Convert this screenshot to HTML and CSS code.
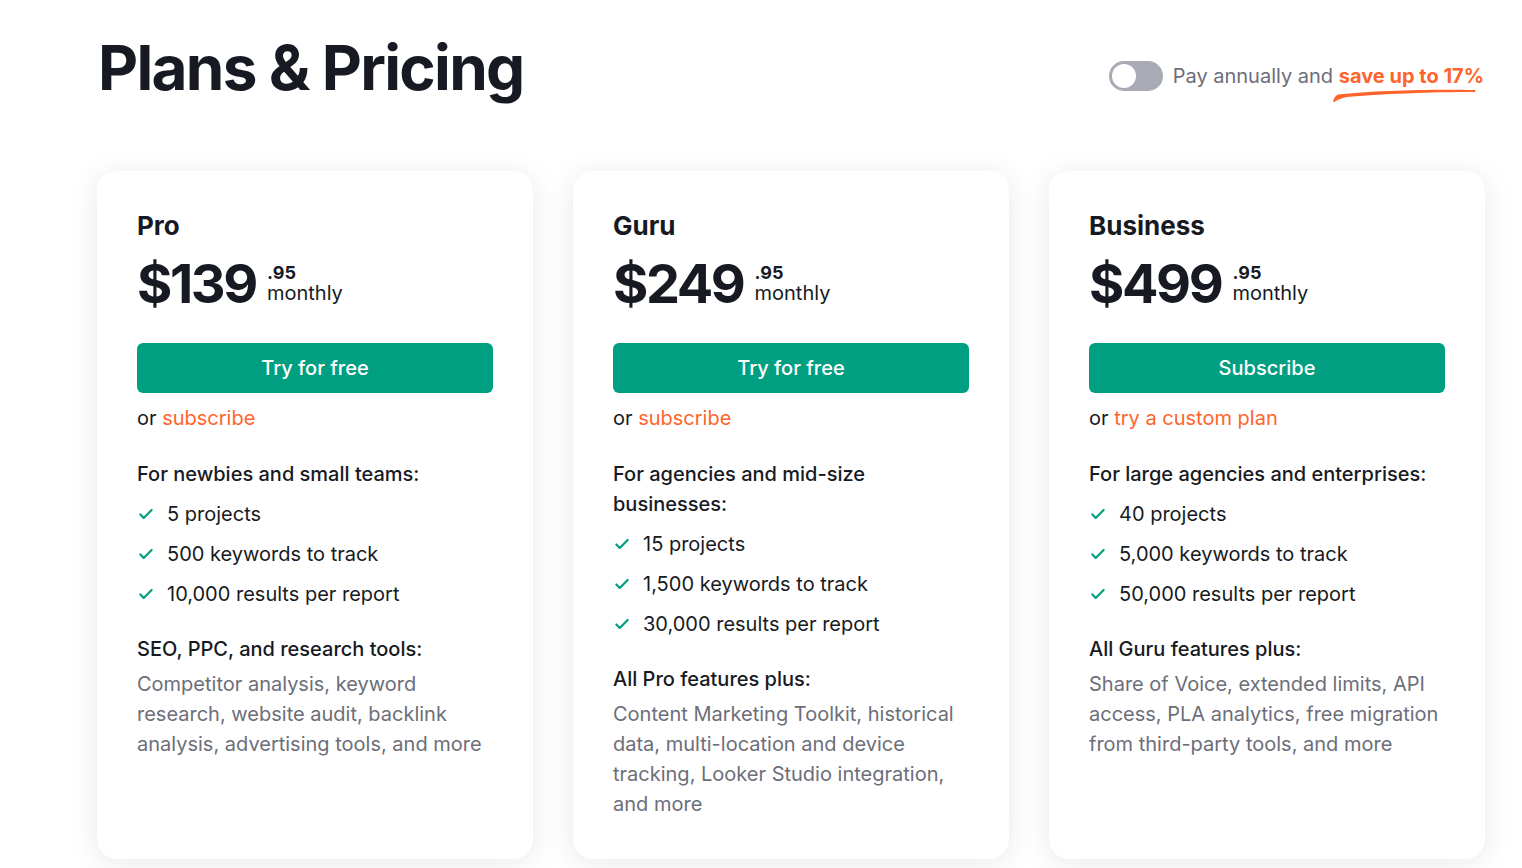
FILE: index.html
```html
<!DOCTYPE html>
<html lang="en">
<head>
<meta charset="utf-8">
<title>Plans &amp; Pricing</title>
<link rel="stylesheet" href="styles.css">
</head>
<body>
<div class="page">
  <header class="top">
    <h1 class="title">Plans &amp; Pricing</h1>
    <div class="billing">
      <span class="toggle"><span class="knob"></span></span>
      <span class="pay">Pay annually and <span class="save">save up to 17%<svg class="swoosh" viewBox="0 0 143 13" preserveAspectRatio="none"><path d="M0 12.5 C 1 9, 2 7, 5 5.5 C 40 1.5, 100 0, 142 1 L 142.5 3 C 100 3, 45 5, 14 8 C 8 9, 4 11, 1.5 13 Z" fill="#ff642d"/></svg></span></span>
    </div>
  </header>

  <section class="cards">
    <article class="card">
      <h2 class="plan">Pro</h2>
      <div class="price"><span class="amount">$139</span><span class="cents"><b>.95</b><span>monthly</span></span></div>
      <a class="btn">Try for free</a>
      <p class="alt">or <span class="link">subscribe</span></p>
      <p class="lead">For newbies and small teams:</p>
      <ul class="checks">
        <li><svg class="check" viewBox="0 0 16 16"><path d="M3 8.5l3 3 7-7" fill="none" stroke="#009f81" stroke-width="2" stroke-linecap="round" stroke-linejoin="round"/></svg>5 projects</li>
        <li><svg class="check" viewBox="0 0 16 16"><path d="M3 8.5l3 3 7-7" fill="none" stroke="#009f81" stroke-width="2" stroke-linecap="round" stroke-linejoin="round"/></svg>500 keywords to track</li>
        <li><svg class="check" viewBox="0 0 16 16"><path d="M3 8.5l3 3 7-7" fill="none" stroke="#009f81" stroke-width="2" stroke-linecap="round" stroke-linejoin="round"/></svg>10,000 results per report</li>
      </ul>
      <p class="lead">SEO, PPC, and research tools:</p>
      <p class="desc">Competitor analysis, keyword research, website audit, backlink analysis, advertising tools, and more</p>
    </article>

    <article class="card">
      <h2 class="plan">Guru</h2>
      <div class="price"><span class="amount">$249</span><span class="cents"><b>.95</b><span>monthly</span></span></div>
      <a class="btn">Try for free</a>
      <p class="alt">or <span class="link">subscribe</span></p>
      <p class="lead">For agencies and mid-size businesses:</p>
      <ul class="checks">
        <li><svg class="check" viewBox="0 0 16 16"><path d="M3 8.5l3 3 7-7" fill="none" stroke="#009f81" stroke-width="2" stroke-linecap="round" stroke-linejoin="round"/></svg>15 projects</li>
        <li><svg class="check" viewBox="0 0 16 16"><path d="M3 8.5l3 3 7-7" fill="none" stroke="#009f81" stroke-width="2" stroke-linecap="round" stroke-linejoin="round"/></svg>1,500 keywords to track</li>
        <li><svg class="check" viewBox="0 0 16 16"><path d="M3 8.5l3 3 7-7" fill="none" stroke="#009f81" stroke-width="2" stroke-linecap="round" stroke-linejoin="round"/></svg>30,000 results per report</li>
      </ul>
      <p class="lead">All Pro features plus:</p>
      <p class="desc">Content Marketing Toolkit, historical data, multi-location and device tracking, Looker Studio integration, and more</p>
    </article>

    <article class="card">
      <h2 class="plan">Business</h2>
      <div class="price"><span class="amount">$499</span><span class="cents"><b>.95</b><span>monthly</span></span></div>
      <a class="btn">Subscribe</a>
      <p class="alt">or <span class="link">try a custom plan</span></p>
      <p class="lead">For large agencies and enterprises:</p>
      <ul class="checks">
        <li><svg class="check" viewBox="0 0 16 16"><path d="M3 8.5l3 3 7-7" fill="none" stroke="#009f81" stroke-width="2" stroke-linecap="round" stroke-linejoin="round"/></svg>40 projects</li>
        <li><svg class="check" viewBox="0 0 16 16"><path d="M3 8.5l3 3 7-7" fill="none" stroke="#009f81" stroke-width="2" stroke-linecap="round" stroke-linejoin="round"/></svg>5,000 keywords to track</li>
        <li><svg class="check" viewBox="0 0 16 16"><path d="M3 8.5l3 3 7-7" fill="none" stroke="#009f81" stroke-width="2" stroke-linecap="round" stroke-linejoin="round"/></svg>50,000 results per report</li>
      </ul>
      <p class="lead">All Guru features plus:</p>
      <p class="desc">Share of Voice, extended limits, API access, PLA analytics, free migration from third-party tools, and more</p>
    </article>
  </section>
</div>
</body>
</html>
```

FILE: styles.css
```css
* { box-sizing: border-box; }
html, body { margin: 0; padding: 0; background: #ffffff; }
body {
  font-family: Inter, "Noto Sans", Arial, sans-serif;
  color: #171a22;
  overflow: hidden;
}
.page {
  padding: 0 38px 0 97px;
  height: 868px;
}
.top {
  display: flex;
  justify-content: space-between;
  align-items: flex-start;
  height: 171px;
}
.title {
  margin: 30px 0 0 1px;
  font-size: 62px;
  font-weight: 700;
  letter-spacing: -1.7px;
  line-height: 76px;
  color: #171a22;
}
.billing {
  display: flex;
  align-items: center;
  gap: 10px;
  margin-top: 61px;
}
.toggle {
  width: 54px;
  height: 30px;
  border-radius: 15px;
  background: #a8aab6;
  display: flex;
  align-items: center;
  padding: 0 3px;
}
.knob {
  width: 24px;
  height: 24px;
  border-radius: 50%;
  background: #fff;
}
.pay {
  font-size: 20px;
  color: #6c6e79;
  line-height: 30px;
}
.save {
  position: relative;
  color: #ff642d;
  font-weight: 700;
}
.swoosh {
  position: absolute;
  left: -6px;
  top: 25px;
  width: 143px;
  height: 13px;
}
.cards {
  display: grid;
  grid-template-columns: repeat(3, 436px);
  gap: 40px;
  height: 687px;
}
.card {
  background: #fff;
  border-radius: 20px;
  box-shadow: 0 4px 28px rgba(30, 35, 60, 0.10);
  padding: 38px 40px 40px;
}
.plan {
  margin: 0;
  font-size: 26px;
  font-weight: 700;
  line-height: 34px;
}
.price {
  display: flex;
  align-items: flex-start;
  margin-top: 10px;
  height: 62px;
}
.amount {
  font-size: 54px;
  font-weight: 700;
  line-height: 62px;
  letter-spacing: -2.4px;
}
.cents {
  display: flex;
  flex-direction: column;
  margin-left: 11px;
  margin-top: 10px;
}
.cents b {
  font-weight: 700;
  font-size: 18px;
  line-height: 20px;
}
.cents span {
  font-size: 20px;
  line-height: 20px;
}
.btn {
  display: flex;
  align-items: center;
  justify-content: center;
  height: 50px;
  margin-top: 28px;
  border-radius: 6px;
  background: #009f81;
  color: #fff;
  font-size: 20px;
  font-weight: 500;
}
.alt {
  margin: 10px 0 0;
  font-size: 20px;
  line-height: 30px;
}
.link { color: #ff642d; }
.lead {
  margin: 26px 0 0;
  font-size: 20px;
  font-weight: 500;
  line-height: 30px;
}
.checks {
  list-style: none;
  margin: 10px 0 0;
  padding: 0;
}
.checks li {
  display: flex;
  align-items: center;
  font-size: 20px;
  line-height: 30px;
  margin-bottom: 10px;
}
.check {
  width: 18px;
  height: 18px;
  margin-right: 12px;
}
.checks + .lead { margin-top: 25px; }
.desc {
  margin: 5px 0 0;
  font-size: 20px;
  line-height: 30px;
  color: #6c6e79;
}
```
